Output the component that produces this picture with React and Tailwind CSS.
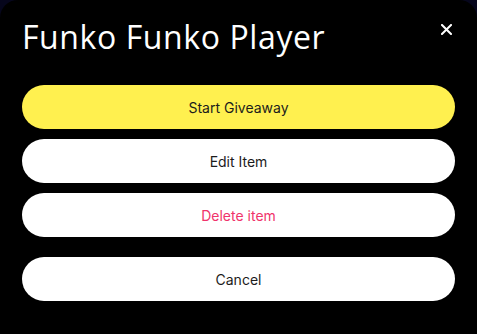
import React from "react";

export default function App() {
  const base =
    "h-[44px] w-full rounded-full flex items-center justify-center text-[14px]";
  return (
    <div className="w-[477px] h-[334px] bg-[#06061c] overflow-hidden">
      <div className="w-full h-[350px] bg-black rounded-[18px] px-[22px] pt-[16px]">
        <div className="flex items-start justify-between">
          <h1
            className="text-[32px] leading-[42px] text-white tracking-[0.6px]"
            style={{ fontFamily: '"Open Sans", sans-serif' }}
          >
            Funko Funko Player
          </h1>
          <button className="mt-[6px] mr-[2px] w-[14px] h-[14px] flex items-center justify-center">
            <svg width="11" height="11" viewBox="0 0 11 11">
              <path d="M1 1L10 10M10 1L1 10" stroke="white" strokeWidth="2" strokeLinecap="square" />
            </svg>
          </button>
        </div>
        <div
          className="mt-[27px] flex flex-col"
          style={{ fontFamily: "Inter, sans-serif" }}
        >
          <button className={base + " bg-[#fff04f] text-[#1c1c1c]"}>Start Giveaway</button>
          <button className={base + " bg-white text-[#1c1c1c] mt-[10px]"}>Edit Item</button>
          <button className={base + " bg-white text-[#f0336b] mt-[10px]"}>Delete item</button>
          <button className={base + " bg-white text-[#1c1c1c] mt-[20px]"}>Cancel</button>
        </div>
      </div>
    </div>
  );
}
